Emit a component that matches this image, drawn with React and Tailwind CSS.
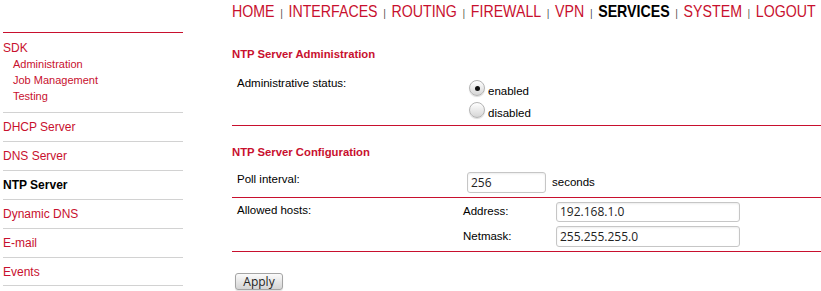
const navItems = ['HOME', 'INTERFACES', 'ROUTING', 'FIREWALL', 'VPN', 'SERVICES', 'SYSTEM', 'LOGOUT'];
const sideItems = ['DHCP Server', 'DNS Server', 'NTP Server', 'Dynamic DNS', 'E-mail', 'Events'];

function Radio({ checked, label }) {
  return (
    <div className="flex items-end h-[19px]">
      <span className="relative mb-[2px] w-[16px] h-[16px] rounded-full border border-[#b4b4b4] bg-gradient-to-b from-white to-[#d6d6d6] shadow-[0_1px_1px_rgba(0,0,0,0.15)] flex items-center justify-center">
        {checked && <span className="w-[5px] h-[5px] rounded-full bg-[#111]" />}
      </span>
      <span className="ml-[3px] text-[11.5px] leading-[14px]">{label}</span>
    </div>
  );
}

function Field({ value, className }) {
  return (
    <div className={`border border-[#c6c6c6] rounded-[3px] bg-white shadow-[inset_0_1px_2px_rgba(0,0,0,0.08)] flex items-center pl-[3px] font-['Open_Sans',sans-serif] text-[12px] text-[#222] ${className}`}>
      {value}
    </div>
  );
}

export default function App() {
  return (
    <div className="flex w-[821px] h-[291px] bg-white overflow-hidden font-['Liberation_Sans',Arial,sans-serif] text-black">
      <aside className="ml-[3px] w-[180px] mt-[32px] shrink-0">
        <div className="border-t border-[#c8102e] pt-[7px] pb-[8px]">
          <div className="text-[12px] leading-[16px] text-[#c8102e]">SDK</div>
          <div className="pl-[10px] text-[11px] leading-[16px] text-[#c8102e]">
            <div>Administration</div>
            <div>Job Management</div>
            <div>Testing</div>
          </div>
        </div>
        {sideItems.map((it, i) => (
          <div
            key={it}
            className={`border-t border-[#d2d2d2] h-[29px] flex items-center text-[12px] ${i === sideItems.length - 1 ? 'border-b' : ''} ${it === 'NTP Server' ? 'font-bold text-black' : 'text-[#c8102e]'}`}
          >
            {it}
          </div>
        ))}
      </aside>

      <main className="ml-[49px] flex-1 min-w-0">
        <nav className="flex items-baseline h-[22px] leading-[23px] text-[17px] whitespace-nowrap origin-left scale-x-[0.835]">
          {navItems.map((it, i) => (
            <span key={it} className="flex items-baseline">
              {i > 0 && <span className="mx-[7px] text-[10px] text-[#333]">|</span>}
              <span className={it === 'SERVICES' ? 'font-bold text-black' : 'text-[#c8102e]'}>{it}</span>
            </span>
          ))}
        </nav>

        <h2 className="mt-[25px] text-[11.3px] leading-[14px] font-bold text-[#c8102e]">NTP Server Administration</h2>
        <div className="flex mt-[15px]">
          <div className="w-[237px] pl-[5px] text-[11.5px] leading-[14px]">Administrative status:</div>
          <div className="pt-[3px] flex flex-col gap-[3px]">
            <Radio checked label="enabled" />
            <Radio label="disabled" />
          </div>
        </div>
        <div className="h-px bg-[#c8102e] mt-[5px]" />

        <h2 className="mt-[19px] text-[11.3px] leading-[14px] font-bold text-[#c8102e]">NTP Server Configuration</h2>
        <div className="flex mt-[13px]">
          <div className="w-[235px] pl-[5px] text-[11.5px] leading-[14px]">Poll interval:</div>
          <div className="flex items-center">
            <Field value="256" className="w-[79px] h-[21px]" />
            <span className="ml-[6px] text-[11.5px]">seconds</span>
          </div>
        </div>
        <div className="h-px bg-[#c8102e] mt-[4px]" />

        <div className="flex pt-[4px]">
          <div className="w-[231px] pl-[5px] pt-[1px] text-[11.5px] leading-[14px]">Allowed hosts:</div>
          <div className="flex flex-col gap-[4px]">
            <div className="flex items-center">
              <span className="w-[93px] text-[11.5px]">Address:</span>
              <Field value="192.168.1.0" className="w-[184px] h-[20px]" />
            </div>
            <div className="flex items-center">
              <span className="w-[93px] text-[11.5px]">Netmask:</span>
              <Field value="255.255.255.0" className="w-[184px] h-[21px]" />
            </div>
          </div>
        </div>
        <div className="h-px bg-[#c8102e] mt-[4px]" />

        <button className="mt-[21px] ml-[3px] w-[48px] h-[17px] border border-[#a4a4a4] rounded-[3px] bg-gradient-to-b from-[#fbfbfb] to-[#d4d4d4] font-['Open_Sans',sans-serif] text-[12px] leading-[15px] text-[#222] shadow-[0_1px_1px_rgba(0,0,0,0.12)]">
          Apply
        </button>
      </main>
    </div>
  );
}
